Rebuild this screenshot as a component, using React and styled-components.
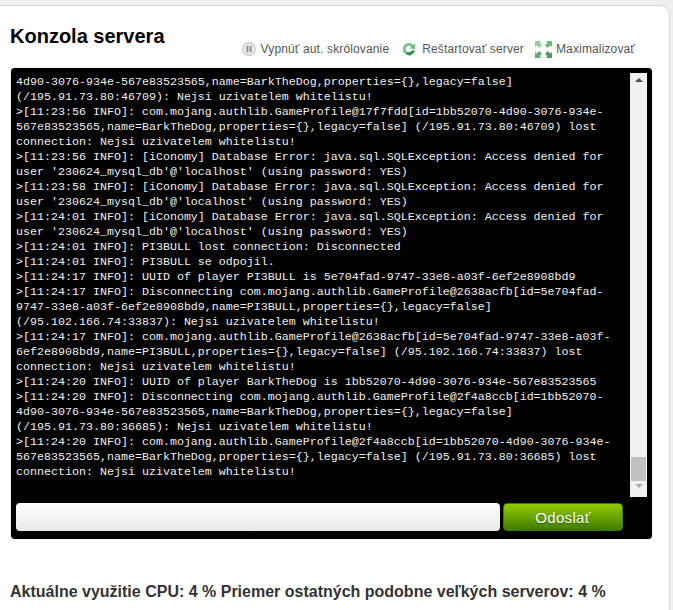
import React from "react";
import styled, { createGlobalStyle } from "styled-components";

const Global = createGlobalStyle`
  html, body { margin: 0; padding: 0; background: #eeeeee; height: 610px; overflow: hidden; }
  body { font-family: "Liberation Sans", Arial, sans-serif; }
`;
const Card = styled.main`
  box-sizing: border-box;
  width: 670px;
  height: 620px;
  margin-top: 5px;
  background: #fff;
  border: 1px solid #d4d4d4;
  border-left: none;
  border-radius: 0 10px 0 0;
  padding: 17px 0 0 11px;
`;
const Header = styled.header`
  display: flex;
  justify-content: space-between;
  align-items: flex-start;
  width: 641px;
  height: 45px;
`;
const Title = styled.h1`
  margin: 0 0 0 -1px;
  font-size: 20px;
  line-height: 27px;
  font-weight: bold;
  color: #000;
`;
const Actions = styled.nav`
  display: flex;
  align-items: center;
  margin: 17px 17px 0 0;
`;
const Action = styled.a`
  display: flex;
  align-items: center;
  gap: ${p => p.$gap}px;
  margin-left: ${p => p.$left}px;
  font-size: 12px;
  line-height: 18px;
  letter-spacing: 0.14px;
  color: #555;
`;
const Console = styled.section`
  box-sizing: border-box;
  position: relative;
  width: 641px;
  height: 471px;
  background: #000;
  border-radius: 4px;
  padding: 5px 5px 0 5px;
  box-shadow: 0 0 1px #999;
`;
const LogArea = styled.div`
  display: flex;
  height: 424px;
`;
const Log = styled.pre`
  flex: 1;
  margin: 0;
  padding-top: 2px;
  overflow: hidden;
  font-family: "Liberation Mono", "Courier New", monospace;
  font-size: 11.67px;
  line-height: 15px;
  color: #f0f0f0;
`;
const Scrollbar = styled.div`
  width: 17px;
  display: flex;
  flex-direction: column;
  align-items: center;
  background: #f1f1f1;
`;
const ScrollTrack = styled.div`
  flex: 1;
  width: 100%;
  display: flex;
  flex-direction: column;
  justify-content: flex-end;
  padding-bottom: 16px;
`;
const Thumb = styled.div`
  height: 24px;
  margin: 0 1px;
  background: #c1c1c1;
`;
const Arrow = styled.span`
  width: 0;
  height: 0;
  margin: 5px 0;
  border-left: 4px solid transparent;
  border-right: 4px solid transparent;
  ${p => (p.$down
    ? "border-top: 4px solid #a8a8a8; position: absolute; bottom: 46px;"
    : "border-bottom: 4px solid #505050;")}
`;
const Form = styled.form`
  display: flex;
  gap: 3px;
  margin-top: 6px;
`;
const Input = styled.input`
  box-sizing: border-box;
  width: 484px;
  height: 28px;
  border: none;
  border-radius: 4px;
  background: linear-gradient(#ffffff, #e8e8e8);
`;
const Send = styled.button`
  width: 120px;
  height: 28px;
  padding: 0;
  border: 1px solid #3f7a00;
  border-radius: 4px;
  background: linear-gradient(#93cc00, #3f7c00);
  color: #fff;
  font: 15px "Liberation Sans", Arial, sans-serif;
  letter-spacing: 0.3px;
  text-shadow: 0 1px 1px #2c5a00;
`;
const Stats = styled.p`
  margin: 43px 0 0 -1px;
  font-size: 16px;
  line-height: 20px;
  font-weight: bold;
  color: #333;
`;

const log = `4d90-3076-934e-567e83523565,name=BarkTheDog,properties={},legacy=false]
(/195.91.73.80:46709): Nejsi uzivatelem whitelistu!
>[11:23:56 INFO]: com.mojang.authlib.GameProfile@17f7fdd[id=1bb52070-4d90-3076-934e-
567e83523565,name=BarkTheDog,properties={},legacy=false] (/195.91.73.80:46709) lost
connection: Nejsi uzivatelem whitelistu!
>[11:23:56 INFO]: [iConomy] Database Error: java.sql.SQLException: Access denied for
user '230624_mysql_db'@'localhost' (using password: YES)
>[11:23:58 INFO]: [iConomy] Database Error: java.sql.SQLException: Access denied for
user '230624_mysql_db'@'localhost' (using password: YES)
>[11:24:01 INFO]: [iConomy] Database Error: java.sql.SQLException: Access denied for
user '230624_mysql_db'@'localhost' (using password: YES)
>[11:24:01 INFO]: PI3BULL lost connection: Disconnected
>[11:24:01 INFO]: PI3BULL se odpojil.
>[11:24:17 INFO]: UUID of player PI3BULL is 5e704fad-9747-33e8-a03f-6ef2e8908bd9
>[11:24:17 INFO]: Disconnecting com.mojang.authlib.GameProfile@2638acfb[id=5e704fad-
9747-33e8-a03f-6ef2e8908bd9,name=PI3BULL,properties={},legacy=false]
(/95.102.166.74:33837): Nejsi uzivatelem whitelistu!
>[11:24:17 INFO]: com.mojang.authlib.GameProfile@2638acfb[id=5e704fad-9747-33e8-a03f-
6ef2e8908bd9,name=PI3BULL,properties={},legacy=false] (/95.102.166.74:33837) lost
connection: Nejsi uzivatelem whitelistu!
>[11:24:20 INFO]: UUID of player BarkTheDog is 1bb52070-4d90-3076-934e-567e83523565
>[11:24:20 INFO]: Disconnecting com.mojang.authlib.GameProfile@2f4a8ccb[id=1bb52070-
4d90-3076-934e-567e83523565,name=BarkTheDog,properties={},legacy=false]
(/195.91.73.80:36685): Nejsi uzivatelem whitelistu!
>[11:24:20 INFO]: com.mojang.authlib.GameProfile@2f4a8ccb[id=1bb52070-4d90-3076-934e-
567e83523565,name=BarkTheDog,properties={},legacy=false] (/195.91.73.80:36685) lost
connection: Nejsi uzivatelem whitelistu!`;

const PauseIcon = () => (
  <svg width="14" height="14" viewBox="0 0 14 14">
    <circle cx="7" cy="7" r="6.3" fill="#ececec" stroke="#c8c8c8" strokeWidth="1.2" />
    <rect x="4.4" y="3.8" width="2" height="6.4" fill="#8f8f8f" />
    <rect x="7.6" y="3.8" width="2" height="6.4" fill="#8f8f8f" />
  </svg>
);
const RestartIcon = () => (
  <svg width="14" height="15" viewBox="0 0 14 15">
    <path d="M7 1a6 6 0 1 0 5.8 7.5H10A3.4 3.4 0 1 1 7 3.6c.9 0 1.6.3 2.2.9L7.5 6.5 13 7V1.5L11 3.2A6 6 0 0 0 7 1z" fill="#6cbc7c" />
    <path d="M4.5 12.5A6 6 0 0 0 12.8 8.5H10A3.4 3.4 0 0 1 5 9.8z" fill="#3f8f50" />
    <path d="M7 14.5 9.6 11.6 7 9.2z" fill="#3f8f50" />
  </svg>
);
const MaximizeIcon = () => (
  <svg width="17" height="17" viewBox="0 0 17 17">
    <path d="M0 0h6L4.6 1.8 7 4.2 4.2 7 1.8 4.6 0 6z" fill="#8fd09c" />
    <path d="M17 0h-6l1.4 1.8L10 4.2 12.8 7l2.4-2.4L17 6z" fill="#6cb87c" />
    <path d="M0 17h6l-1.4-1.8L7 12.8 4.2 10l-2.4 2.4L0 11z" fill="#5aae6c" />
    <path d="M17 17h-6l1.4-1.8-2.4-2.4L12.8 10l2.4 2.4L17 11z" fill="#4a9a5c" />
  </svg>
);

export default function App() {
  return (
    <>
      <Global />
      <Card>
        <Header>
          <Title>Konzola servera</Title>
          <Actions>
            <Action $gap={5}><PauseIcon />Vypnúť aut. skrólovanie</Action>
            <Action $gap={6} $left={13}><RestartIcon />Reštartovať server</Action>
            <Action $gap={4} $left={11}><MaximizeIcon />Maximalizovať</Action>
          </Actions>
        </Header>
        <Console>
          <LogArea>
            <Log>{log}</Log>
            <Scrollbar>
              <Arrow />
              <ScrollTrack><Thumb /></ScrollTrack>
              <Arrow $down />
            </Scrollbar>
          </LogArea>
          <Form onSubmit={e => e.preventDefault()}>
            <Input />
            <Send type="button">Odoslať</Send>
          </Form>
        </Console>
        <Stats>Aktuálne využitie CPU: 4 % Priemer ostatných podobne veľkých serverov: 4 %</Stats>
      </Card>
    </>
  );
}
